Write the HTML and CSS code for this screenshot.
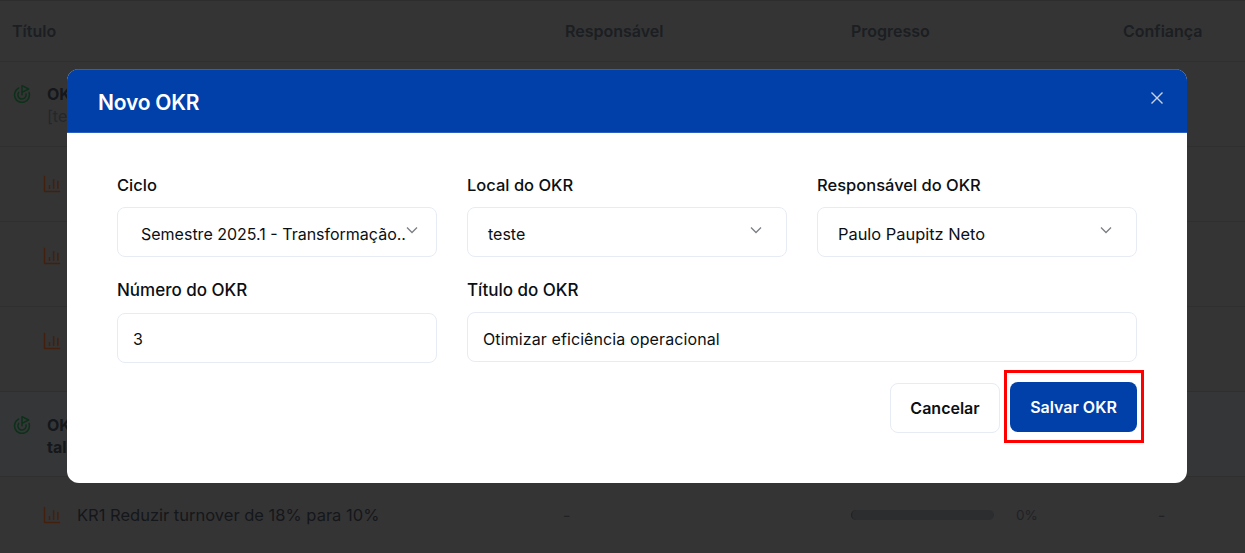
FILE: index.html
```html
<!DOCTYPE html>
<html lang="pt-BR">
<head>
<meta charset="utf-8">
<title>Novo OKR</title>
<link rel="stylesheet" href="styles.css">
</head>
<body>
<main class="page">
  <div class="row head">
    <div class="c-title">Título</div>
    <div class="c-resp">Responsável</div>
    <div class="c-prog">Progresso</div>
    <div class="c-conf">Confiança</div>
  </div>
  <div class="row tall okr">
    <div class="c-title">
      <svg class="ico goal" viewBox="0 0 24 24"><path d="M12 13V2l8 4-8 4"/><path d="M20.561 10.222a9 9 0 1 1-12.55-5.29"/><path d="M8.002 9.997a5 5 0 1 0 8.9 2.02"/></svg>
      <div><b>OKR1</b><span class="sub">[teste]</span></div>
    </div>
  </div>
  <div class="row short kr">
    <div class="c-title"><svg class="ico chart" viewBox="0 0 24 24"><path d="M3 3v17a1 1 0 0 0 1 1h17"/><path d="M9 17v-3"/><path d="M14 17V7"/><path d="M19 17V9"/></svg></div>
  </div>
  <div class="row tall kr up">
    <div class="c-title"><svg class="ico chart" viewBox="0 0 24 24"><path d="M3 3v17a1 1 0 0 0 1 1h17"/><path d="M9 17v-3"/><path d="M14 17V7"/><path d="M19 17V9"/></svg></div>
  </div>
  <div class="row tall kr up">
    <div class="c-title"><svg class="ico chart" viewBox="0 0 24 24"><path d="M3 3v17a1 1 0 0 0 1 1h17"/><path d="M9 17v-3"/><path d="M14 17V7"/><path d="M19 17V9"/></svg></div>
  </div>
  <div class="row tall okr lit">
    <div class="c-title">
      <svg class="ico goal" viewBox="0 0 24 24"><path d="M12 13V2l8 4-8 4"/><path d="M20.561 10.222a9 9 0 1 1-12.55-5.29"/><path d="M8.002 9.997a5 5 0 1 0 8.9 2.02"/></svg>
      <div><b>OKR2</b><b class="line">talentos</b></div>
    </div>
  </div>
  <div class="row last kr">
    <div class="c-title"><svg class="ico chart" viewBox="0 0 24 24"><path d="M3 3v17a1 1 0 0 0 1 1h17"/><path d="M9 17v-3"/><path d="M14 17V7"/><path d="M19 17V9"/></svg><span class="kr-text">KR1 Reduzir turnover de 18% para 10%</span></div>
    <div class="c-resp nudge">-</div>
    <div class="c-prog"><span class="bar"></span><span class="pct">0%</span></div>
    <div class="c-conf dash">-</div>
  </div>
</main>

<section class="modal">
  <header class="modal-head">
    <h2>Novo OKR</h2>
    <svg class="close" viewBox="0 0 14 14"><path d="M1.5 1.5l11 11M12.5 1.5l-11 11"/></svg>
  </header>
  <form class="modal-body">
    <div class="grid">
      <div class="field">
        <label>Ciclo</label>
        <div class="control select pad-wide"><span class="val">Semestre 2025.1 - Transformação..</span><svg class="chev" viewBox="0 0 12 8"><path d="M1 1.5l5 5 5-5"/></svg></div>
      </div>
      <div class="field">
        <label>Local do OKR</label>
        <div class="control select"><span class="val">teste</span><svg class="chev" viewBox="0 0 12 8"><path d="M1 1.5l5 5 5-5"/></svg></div>
      </div>
      <div class="field">
        <label>Responsável do OKR</label>
        <div class="control select"><span class="val wide">Paulo Paupitz Neto</span><svg class="chev" viewBox="0 0 12 8"><path d="M1 1.5l5 5 5-5"/></svg></div>
      </div>
      <div class="field">
        <label class="lbl-big lbl-low">Número do OKR</label>
        <div class="control text"><span class="val">3</span></div>
      </div>
      <div class="field span2">
        <label class="lbl-big">Título do OKR</label>
        <div class="control text low"><span class="val spaced">Otimizar eficiência operacional</span></div>
      </div>
    </div>
    <div class="actions">
      <button type="button" class="btn cancel">Cancelar</button>
      <button type="button" class="btn save">Salvar OKR<span class="mark"></span></button>
    </div>
  </form>
</section>
</body>
</html>
```
FILE: styles.css
```css
* { box-sizing: border-box; }
html, body { margin: 0; height: 100%; }
body {
  overflow: hidden;
  background: #343434;
  font-family: Inter, "Noto Sans", sans-serif;
  font-size: 16px;
  color: #14171b;
}
.page { display: flex; flex-direction: column; border-top: 1px solid #2d2d2d; }
.row {
  display: grid;
  grid-template-columns: 565px 286px 272px 1fr;
  align-items: center;
  border-bottom: 1px solid #2f2f2f;
  flex: none;
}
.head { height: 61px; font-weight: 600; }
.head .c-title, .head .c-resp, .head .c-prog, .head .c-conf { color: #1b1e22; }
.tall { height: 85px; }
.up { padding-bottom: 17px; }
.short { height: 75px; }
.last { height: 80px; border-bottom: 0; padding-bottom: 4px; }
.okr { align-items: start; padding-top: 21px; }
.lit { background: #353637; padding-top: 22px; }
.c-title { padding-left: 12px; display: flex; align-items: center; }
.kr .c-title { padding-left: 42px; }
.okr .c-title { align-items: flex-start; line-height: 22px; }
.ico { width: 20px; height: 20px; fill: none; stroke-width: 1.8; stroke-linecap: round; stroke-linejoin: round; flex: none; }
.goal { stroke: #0c3019; margin-right: 15px; margin-top: 1px; }
.chart { stroke: #43200e; margin-right: 15px; }
.kr-text { font-size: 16.5px; }
.sub { display: block; color: #24272b; }
.line { display: block; }
.c-prog { display: flex; align-items: center; }
.bar { width: 143px; height: 10px; border-radius: 5px; background: #2b2d2f; border-left: 1px solid #1f2124; }
.pct { margin-left: 22px; font-size: 13.5px; color: #202226; }
.c-resp, .dash { color: #202226; }
.nudge { margin-left: -2px; }
.dash { padding-left: 35px; }

.modal {
  position: absolute;
  left: 67px;
  top: 69px;
  width: 1120px;
  height: 414px;
  background: #fff;
  border-radius: 12px;
  overflow: hidden;
}
.modal-head {
  height: 64px;
  background: #0040a8;
  border-top: 1px solid #3a5f9e;
  border-bottom: 1px solid #2a5fc0;
  display: flex;
  align-items: center;
  justify-content: space-between;
  padding: 0 23px 0 31px;
  color: #fff;
}
.modal-head h2 { margin: 3px 0 0; font-size: 21px; font-weight: 600; letter-spacing: -0.2px; }
.close { width: 14px; height: 14px; fill: none; stroke: #c9d3ea; stroke-width: 1.4; margin-bottom: 6px; }
.modal-body { padding: 40px 50px 0; color: #0b0f14; }
.grid { display: grid; grid-template-columns: repeat(3, 320px); column-gap: 30px; row-gap: 21px; }
.span2 { grid-column: span 2; }
.field { display: flex; flex-direction: column; }
label { font-weight: 500; font-size: 16.5px; height: 24px; line-height: 24px; margin-bottom: 10px; }
.lbl-big { font-size: 17px; }
.control {
  height: 50px;
  border: 1px solid #e6ebf4;
  border-radius: 8px;
  display: flex;
  align-items: center;
  padding: 0 15px;
  background: #fff;
  font-size: 16px;
}
.text { padding-top: 2px; }
.low { padding-top: 4px; }
.select { padding: 4px 24px 0 20px; justify-content: space-between; }
.pad-wide { padding-left: 23px; padding-right: 18px; }
.val { white-space: nowrap; }
.wide { font-size: 16.4px; }
.spaced { letter-spacing: 0.1px; }
.lbl-low { margin-bottom: 11px; }
.chev { width: 12px; height: 8px; fill: none; stroke: #7b7f85; stroke-width: 1.3; margin-top: -8px; flex: none; }
.actions { display: flex; justify-content: flex-end; gap: 10px; margin-top: 19px; }
.btn {
  height: 50px;
  border-radius: 8px;
  font: 600 16px Inter, "Noto Sans", sans-serif;
  position: relative;
}
.cancel { width: 110px; margin-top: 1px; background: #fff; color: #0b0f14; border: 1px solid #e6ebf4; }
.save { width: 127px; background: #0040a8; color: #fff; border: 0; }
.mark {
  position: absolute;
  left: -6px;
  top: -12px;
  width: 140px;
  height: 73px;
  border: 3px solid #ff0000;
  pointer-events: none;
}
```
